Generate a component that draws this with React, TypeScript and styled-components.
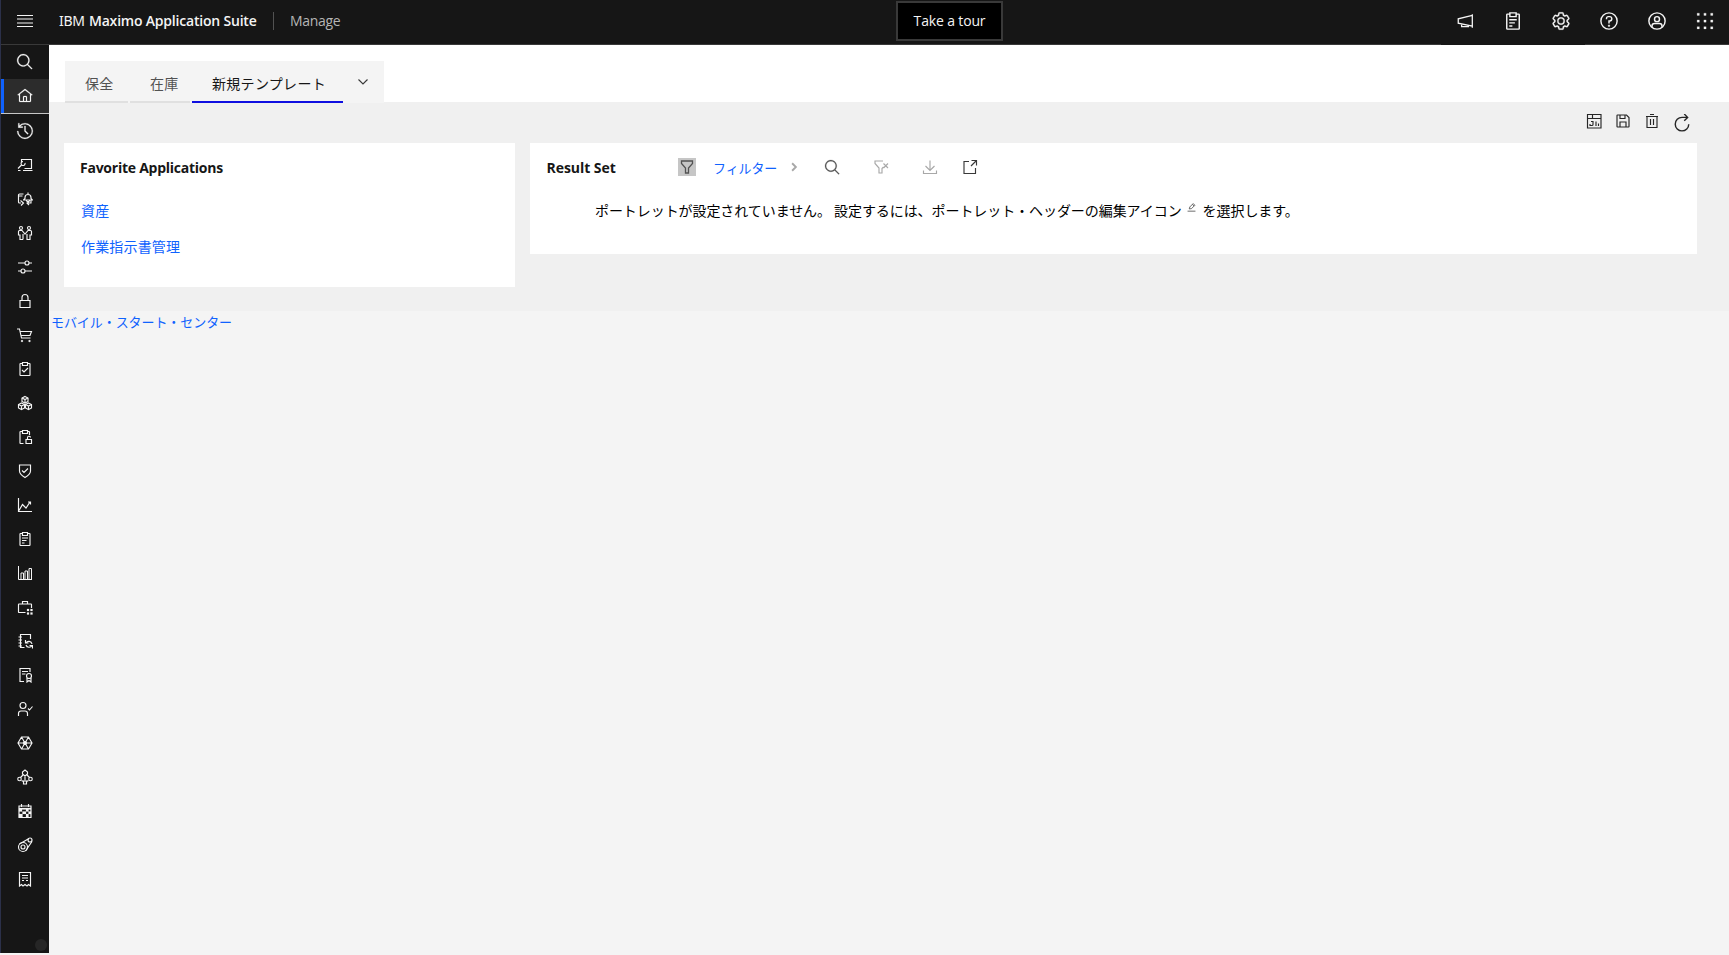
import React from 'react';
import styled, { createGlobalStyle } from 'styled-components';

const Global = createGlobalStyle`
  * { box-sizing: border-box; }
  body { margin: 0; background: #f4f4f4; overflow: hidden; }
  a { color: #0f62fe; text-decoration: none; }
`;

const latin = `'Open Sans', 'Noto Sans CJK JP', sans-serif`;
const japanese = `'Noto Sans CJK JP', 'Open Sans', sans-serif`;

/* ---------- icons (32 unit grid) ---------- */

const Svg = styled.svg<{ $size: number }>`
  display: block;
  flex: none;
  width: ${(p) => p.$size}px;
  height: ${(p) => p.$size}px;
  fill: none;
  stroke: currentColor;
  stroke-width: 2.3;
  .f { fill: currentColor; stroke: currentColor; stroke-width: 0.4; }
`;

const icons = {
  menu: <path d="M0 5h32M0 12h32M0 20h32M0 27h32" />,
  search: <path className="f" d="M29,27.5859l-7.5521-7.5521a11.0177,11.0177,0,1,0-1.4141,1.4141L27.5859,29ZM4,13a9,9,0,1,1,9,9A9.01,9.01,0,0,1,4,13Z" />,
  home: <path className="f" d="M16.6123,2.2138a1.01,1.01,0,0,0-1.2427,0L1,13.4194l1.2427,1.5717L4,13.6208V26a2.0041,2.0041,0,0,0,2,2H26a2.0037,2.0037,0,0,0,2-2V13.63L29.7573,15,31,13.4282ZM18,26H14V18h4Zm2,0V18a2.0023,2.0023,0,0,0-2-2H14a2.002,2.002,0,0,0-2,2v8H6V12.0615l10-7.79,10,7.8005V26Z" />,
  recent: <path className="f" d="M20.59 22 15 16.41 15 7 17 7 17 15.58 22 20.59 20.59 22zM16,2A13.94,13.94,0,0,0,6,6.23V2H4v8h8V8H7.08A12,12,0,1,1,4,16H2A14,14,0,1,0,16,2Z" />,
  workstation: <><path d="M9 10V5h20v18H15M12 27h19M2 27h5" /><path d="M2 23l7-7M16 12a4 4 0 1 1-4-3" /></>,
  changes: <><path d="M13 6H5a2 2 0 0 0-2 2v14a2 2 0 0 0 2 2h3M7 19l6 5-5 5M3 10h8" /><path d="M12 18h19l-3-3v-2a6 6 0 0 0-12 0v2l-3 3M22 7V3M19 19c0 3 6 3 6 0M28 19v5h-7M24 21l-4 3 4 4" /></>,
  people: <><circle cx="8" cy="6" r="3" /><circle cx="24" cy="6" r="3" /><path d="M12 29H6v-9H3v-7a2 2 0 0 1 2-2h5l6 7 6-7h5a2 2 0 0 1 2 2v7h-3v9h-6v-11M12 29V18" /></>,
  sliders: <><path d="M2 8h14M24 8h6M2 24h6M16 24h14" /><circle cx="20" cy="8" r="4" /><circle cx="12" cy="24" r="4" /></>,
  lock: <path d="M6 15h20v14H6zM10 15V9a6 6 0 0 1 12 0v6" />,
  cart: <><path d="M0 4h5l4 18h18M7 9h22l-3 8H8" /><circle className="f" cx="10" cy="28" r="2" /><circle className="f" cx="25" cy="28" r="2" /></>,
  taskDone: <><path d="M10 5H7a1 1 0 0 0-1 1v22a1 1 0 0 0 1 1h18a1 1 0 0 0 1-1V6a1 1 0 0 0-1-1h-3M11 3h10v6H11z" /><path d="M10 18l4 4 8-8" /></>,
  assets: <><path d="M16 3l6 3v7l-6 3-6-3V6zM9 16l6 3v7l-6 3-6-3v-7zM23 16l6 3v7l-6 3-6-3v-7z" /><path d="M10 6l6 3 6-3M16 9v7M3 19l6 3 6-3M9 22v7M17 19l6 3 6-3M23 22v7" /></>,
  taskLocked: <><path d="M13 29H7a1 1 0 0 1-1-1V6a1 1 0 0 1 1-1h4M21 5h3a1 1 0 0 1 1 1v6M11 3h10v6H11zM18 21h11v8H18zM21 21v-3a3 3 0 0 1 6-1" /></>,
  shield: <path d="M5 4h22v12c0 6-4 9-11 13C9 25 5 22 5 16zM10 15l4 4 8-8" />,
  line: <path d="M3 2v27h27M4 27l7-12 7 7 8-12M22 10h5v5" />,
  task: <><path d="M10 5H7a1 1 0 0 0-1 1v22a1 1 0 0 0 1 1h18a1 1 0 0 0 1-1V6a1 1 0 0 0-1-1h-3M11 3h10v6H11z" /><path d="M10 14h12M10 19h9M10 24h5" /></>,
  bars: <path strokeWidth="2" d="M3 2v27h27M8 29V16h5v13M16 29V12h5v17M24 29V7h5v22" />,
  briefcase: <><path d="M17 27H4a1 1 0 0 1-1-1V11a1 1 0 0 1 1-1h24a1 1 0 0 1 1 1v7M11 10V5h10v5" /><path className="f" d="M20 20h4v4h-4zM27 20h4v4h-4zM20 27h4v4h-4zM27 27h4v4h-4z" /></>,
  notebook: <><path d="M27 12V3H7v26h8M3 8h7M3 14h7M3 20h7M3 26h7" /><path d="M17 14v6h6M18 20a6.5 6.5 0 0 1 12 2M31 31v-6h-6M30 25a6.5 6.5 0 0 1-12-1" /></>,
  certificate: <><path d="M14 29H6V3h20v7M10 9h12M10 14h7" /><circle cx="24" cy="18" r="5" /><path d="M20 22v8l4-3 4 3v-8" /></>,
  userCheck: <><circle cx="12" cy="9" r="6" /><path d="M3 30v-5a5 5 0 0 1 5-5h8a5 5 0 0 1 5 5v5M22 15l3 3 6-7" /></>,
  wheel: <><path d="M9 4h14l7 12-7 12H9L2 16zM9 4l14 24M23 4L9 28M2 16h28" /><circle cx="16" cy="16" r="3" /></>,
  network: <><path d="M11 10V6l5-4 5 4v4l-5 4-5-4zM16 14v9M12 12l-5 5M20 12l5 5M9 23l4 2M23 23l-4 2" /><circle cx="5" cy="20" r="3.5" /><circle cx="27" cy="20" r="3.5" /><path d="M13 24h6v6h-6z" /></>,
  calendar: <><path d="M4 6h24v23H4zM9 2v6M23 2v6" /><path className="f" d="M4 10h24v3H4zM4 13h6v4H4zM18 13h5v4h-5zM11 17h7v5h-7zM4 22h7v6H4zM18 22h5v6h-5zM23 17h5v5h-5z" /></>,
  belt: <><circle cx="12" cy="20" r="9" /><circle cx="12" cy="20" r="4" /><path d="M5 14L24 3M17 28L30 9" /><circle cx="26" cy="6" r="4" /></>,
  receipt: <><path d="M5 30V3h22v27l-4-3-3 3-4-3-4 3-3-3z" /><path d="M10 9h12M10 14h12M10 19h4M18 19h4" /></>,
  megaphone: <><path d="M29 4v24M29 6L4 12v8l25 5" /><path d="M10 22v4h12v-3" /></>,
  gear: <path className="f" d="M27,16.76c0-.25,0-.5,0-.76s0-.51,0-.77l1.92-1.68A2,2,0,0,0,29.3,11L26.94,7a2,2,0,0,0-1.73-1,2,2,0,0,0-.64.1l-2.43.82a11.35,11.35,0,0,0-1.31-.75l-.51-2.52a2,2,0,0,0-2-1.61H13.64a2,2,0,0,0-2,1.61l-.51,2.52a11.48,11.48,0,0,0-1.32.75L7.43,6.06A2,2,0,0,0,6.79,6,2,2,0,0,0,5.06,7L2.7,11a2,2,0,0,0,.41,2.51L5,15.24c0,.25,0,.5,0,.76s0,.51,0,.77L3.11,18.45A2,2,0,0,0,2.7,21L5.06,25a2,2,0,0,0,1.73,1,2,2,0,0,0,.64-.1l2.43-.82a11.35,11.35,0,0,0,1.31.75l.51,2.52a2,2,0,0,0,2,1.61h4.72a2,2,0,0,0,2-1.61l.51-2.52a11.48,11.48,0,0,0,1.32-.75l2.42.82a2,2,0,0,0,.64.1,2,2,0,0,0,1.73-1L29.3,21a2,2,0,0,0-.41-2.51ZM25.21,24l-3.43-1.16a8.86,8.86,0,0,1-2.71,1.57L18.36,28H13.64l-.71-3.55a9.36,9.36,0,0,1-2.7-1.57L6.79,24,4.43,20l2.72-2.4a8.9,8.9,0,0,1,0-3.13L4.43,12,6.79,8l3.43,1.16a8.86,8.86,0,0,1,2.71-1.57L13.64,4h4.72l.71,3.55a9.36,9.36,0,0,1,2.7,1.57L25.21,8,27.57,12l-2.72,2.4a8.9,8.9,0,0,1,0,3.13L27.57,20ZM16,22a6,6,0,1,1,6-6A5.94,5.94,0,0,1,16,22Zm0-10a3.91,3.91,0,0,0-4,4,3.91,3.91,0,0,0,4,4,3.91,3.91,0,0,0,4-4A3.91,3.91,0,0,0,16,12Z" />,
  help: <><circle cx="16" cy="16" r="13" /><path d="M12 13v-1a3 3 0 0 1 3-3h2a3.5 3.5 0 0 1 0 7h-1v4" /><circle className="f" cx="16" cy="23.5" r="1.5" /></>,
  user: <><circle cx="16" cy="16" r="13" /><circle cx="16" cy="13" r="4" /><path d="M8 26v-2a4 4 0 0 1 4-4h8a4 4 0 0 1 4 4v2" /></>,
  apps: <path className="f" d="M2 2h4v4H2zM14 2h4v4h-4zM26 2h4v4h-4zM2 14h4v4H2zM14 14h4v4h-4zM26 14h4v4h-4zM2 26h4v4H2zM14 26h4v4h-4zM26 26h4v4h-4z" />,
  layout: <path d="M3 3h27v27H3zM3 11h27M13 3v8M10 17h4v6a2 2 0 0 1-2 2H8v-3M20 17v9M25 21v5" />,
  save: <path d="M4 5a1 1 0 0 1 1-1h18l5 5v18a1 1 0 0 1-1 1H5a1 1 0 0 1-1-1zM10 4v7h10V4M10 28V18h12v10" />,
  trash: <path d="M4 7h24M6 7v22h20V7M12 3h8M13 12v12M19 12v12" />,
  refresh: <path strokeWidth="2.5" d="M25 6H16A12 12 0 1 0 28 18M20 0l6 6-6 6" />,
  filter: <path strokeWidth="2.6" d="M5 4h22v5l-8 9v10h-6V18L5 9z" />,
  filterClear: <path d="M20 4H4v5l8 9v10h6v-9l3-3M21 9l9 9M30 9l-9 9" />,
  download: <path d="M16 3v20M7 14l9 9 9-9M3 23v6h26v-6" />,
  launch: <path d="M14 5H4v24h23V18M19 3h10v10M29 3L18 14" />,
  chevronDown: <path d="M7 11l9 9 9-9" />,
  chevronRight: <path strokeWidth="5" d="M11 6l10 10-10 10" />,
  edit: <path strokeWidth="3" d="M2 29h28M8 21l2-7L22 2l6 6-12 12zM19 5l6 6" />,
};

type IconName = keyof typeof icons;
const Icon = ({ name, size = 16 }: { name: IconName; size?: number }) => (
  <Svg $size={size} viewBox="0 0 32 32">{icons[name]}</Svg>
);

/* ---------- header ---------- */

const Page = styled.div`
  display: flex;
  flex-direction: column;
  height: 955px;
  font-family: ${latin};
  color: #161616;
`;

const Header = styled.header`
  display: grid;
  grid-template-columns: 895px 107px 1fr;
  flex: none;
  height: 45px;
  background: linear-gradient(90deg, #393939 1440px, #161616 1440px 1584px, #393939 1584px) bottom / 100% 1px no-repeat #161616;
  border-left: 1px solid #2b3049;
  color: #f4f4f4;
`;

const Brand = styled.div`
  display: flex;
  align-items: center;
  height: 41px;
  padding-left: 16px;
  font-size: 14px;
  white-space: pre;
`;

const Product = styled.span`
  display: flex;
  width: 198px;
  margin-left: 26px;
`;

const Ibm = styled.span`
  width: 30px;
  font-family: 'Noto Sans', sans-serif;
  letter-spacing: -0.3px;
`;

const Suite = styled.span`
  font-weight: 600;
  letter-spacing: -0.2px;
`;

const AppName = styled.span`
  height: 18px;
  margin-left: 16px;
  padding-left: 16px;
  border-left: 1px solid #525252;
  line-height: 17px;
  color: #b5b5b5;
  letter-spacing: -0.3px;
`;

const TourButton = styled.button`
  height: 40px;
  margin-top: 1px;
  padding: 0 0 2px;
  border: 2px solid #393939;
  background: #000;
  color: #f4f4f4;
  font: 14px ${latin};
  letter-spacing: -0.15px;
`;

const HeaderActions = styled.div`
  display: flex;
  justify-content: flex-end;
  height: 44px;
`;

const HeaderAction = styled.button`
  display: flex;
  align-items: center;
  justify-content: center;
  width: 48px;
  height: 42px;
  padding: 0;
  border: 0;
  background: none;
  color: inherit;
`;

/* ---------- side navigation ---------- */

const Body = styled.div`
  display: flex;
  flex: 1;
  min-height: 0;
`;

const SideNav = styled.nav`
  display: flex;
  flex-direction: column;
  flex: none;
  width: 49px;
  height: 908px;
  background: #161616;
  border-left: 1px solid #2b3049;
  color: #f4f4f4;
`;

const NavItem = styled.a<{ $active?: boolean }>`
  display: flex;
  align-items: center;
  justify-content: center;
  flex: none;
  height: ${(p) => (p.$active ? 35 : 34)}px;
  color: #f4f4f4;
  ${(p) => p.$active && `
    background: #2c2c2c;
    border-bottom: 1px solid #c6c6c6;
    box-shadow: inset 3px 0 #0f62fe;
  `}
`;

const NavDot = styled.span`
  width: 12px;
  height: 12px;
  margin: auto 2px 2px auto;
  border-radius: 50%;
  background: #262626;
`;

/* ---------- start centre ---------- */

const Main = styled.main`
  display: flex;
  flex-direction: column;
  flex: 1;
`;

const TabBar = styled.div`
  display: flex;
  height: 58px;
  padding: 16px 0 0 16px;
  background: linear-gradient(#fff 57px, #f0f0f0 57px);
`;

const TabList = styled.div`
  display: flex;
  width: 319px;
  background: #f4f4f4;
`;

const Tab = styled.button<{ $width: number; $selected?: boolean }>`
  width: ${(p) => p.$width}px;
  margin-right: ${(p) => (p.$selected ? 0 : 2)}px;
  padding: 3px 0 0 20px;
  text-align: left;
  border: 0;
  border-bottom: 2px solid ${(p) => (p.$selected ? '#0f0fe0' : '#e0e0e0')};
  background: none;
  color: ${(p) => (p.$selected ? '#161616' : '#525252')};
  font: 14px ${japanese};
  letter-spacing: ${(p) => (p.$selected ? 0.3 : 0.16)}px;
  white-space: nowrap;
`;

const TabMenu = styled.button`
  display: flex;
  align-items: center;
  justify-content: center;
  width: 39px;
  padding: 0 0 1px;
  border: 0;
  background: none;
  color: #393939;
`;

const Dashboard = styled.section`
  height: 208px;
  padding-left: 15px;
  background: #f0f0f0;
`;

const Toolbar = styled.div`
  display: flex;
  justify-content: flex-end;
  align-items: flex-start;
  gap: 13px;
  height: 40px;
  padding: 10px 38px 0 0;
  color: #262626;
`;

const RefreshSlot = styled.span`
  margin-top: 1px;
`;

const Portlets = styled.div`
  display: flex;
  align-items: flex-start;
  gap: 15px;
`;

const Portlet = styled.article<{ $width: number; $height: number }>`
  width: ${(p) => p.$width}px;
  height: ${(p) => p.$height}px;
  padding: 12px 16px 0;
  background: #fff;
`;

const PortletHeader = styled.div`
  display: flex;
  align-items: center;
  height: 26px;
`;

const Title = styled.h2<{ $spacing: number }>`
  margin: -2px 0 0;
  font-size: 14px;
  font-weight: 700;
  letter-spacing: ${(p) => p.$spacing}px;
  white-space: nowrap;
`;

const ResultTitle = styled.div`
  width: 132px;
  padding-left: 0.5px;
`;

const Favorites = styled.div`
  display: flex;
  flex-direction: column;
  gap: 12px;
  padding: 17px 0 0 1px;
  font: 14px/24px ${japanese};
  letter-spacing: 0.16px;
`;

const FilterToggle = styled.span`
  display: flex;
  align-items: center;
  justify-content: center;
  width: 18px;
  height: 18px;
  margin-top: -2px;
  background: #c6c6c6;
  color: #525252;
`;

const FilterLink = styled.a`
  width: 76px;
  margin: -2px 0 0 17px;
  font: 13px ${japanese};
  letter-spacing: -0.1px;
`;

const Tool = styled.span<{ $left: number; $color: string }>`
  margin: -2px 0 0 ${(p) => p.$left}px;
  color: ${(p) => p.$color};
`;

const Message = styled.p`
  display: flex;
  align-items: center;
  margin: 17px 0 0 49px;
  font: 14px/24px ${japanese};
  letter-spacing: -0.07px;
  color: #000;
  white-space: pre;
`;

const EditMark = styled.span`
  margin: -5px 7px 0 5px;
  color: #525252;
`;

const MobileLink = styled.a`
  margin-top: -1px;
  padding-left: 2px;
  font: 13px/24px ${japanese};
  letter-spacing: -0.07px;
`;

const headerActions: IconName[] = ['megaphone', 'task', 'gear', 'help', 'user', 'apps'];
const navItems: IconName[] = [
  'search', 'home', 'recent', 'workstation', 'changes', 'people', 'sliders', 'lock', 'cart',
  'taskDone', 'assets', 'taskLocked', 'shield', 'line', 'task', 'bars', 'briefcase', 'notebook',
  'certificate', 'userCheck', 'wheel', 'network', 'calendar', 'belt', 'receipt',
];
const headerIconSizes: Partial<Record<IconName, number>> = { apps: 18, megaphone: 18 };
const navIconSizes: Partial<Record<IconName, number>> = { search: 18, recent: 18 };

export default function App() {
  return (
    <Page>
      <Global />
      <Header>
        <Brand>
          <Icon name="menu" />
          <Product><Ibm>IBM</Ibm><Suite>Maximo Application Suite</Suite></Product>
          <AppName>Manage</AppName>
        </Brand>
        <TourButton>Take a tour</TourButton>
        <HeaderActions>
          {headerActions.map((name) => (
            <HeaderAction key={name}><Icon name={name} size={headerIconSizes[name] ?? 20} /></HeaderAction>
          ))}
        </HeaderActions>
      </Header>
      <Body>
        <SideNav>
          {navItems.map((name) => (
            <NavItem key={name} $active={name === 'home'}><Icon name={name} size={navIconSizes[name] ?? 16} /></NavItem>
          ))}
          <NavDot />
        </SideNav>
        <Main>
          <TabBar>
            <TabList>
              <Tab $width={63}>保全</Tab>
              <Tab $width={60}>在庫</Tab>
              <Tab $width={151} $selected>新規テンプレート</Tab>
              <TabMenu><Icon name="chevronDown" /></TabMenu>
            </TabList>
          </TabBar>
          <Dashboard>
            <Toolbar>
              <Icon name="layout" />
              <Icon name="save" />
              <Icon name="trash" />
              <RefreshSlot><Icon name="refresh" size={18} /></RefreshSlot>
            </Toolbar>
            <Portlets>
              <Portlet $width={451} $height={144}>
                <PortletHeader><Title $spacing={-0.25}>Favorite Applications</Title></PortletHeader>
                <Favorites>
                  <a>資産</a>
                  <a>作業指示書管理</a>
                </Favorites>
              </Portlet>
              <Portlet $width={1167} $height={111}>
                <PortletHeader>
                  <ResultTitle><Title $spacing={-0.05}>Result Set</Title></ResultTitle>
                  <FilterToggle><Icon name="filter" /></FilterToggle>
                  <FilterLink>フィルター</FilterLink>
                  <Tool $left={-1} $color="#a8a8a8"><Icon name="chevronRight" size={12} /></Tool>
                  <Tool $left={24} $color="#525252"><Icon name="search" size={17} /></Tool>
                  <Tool $left={32} $color="#a8a8a8"><Icon name="filterClear" /></Tool>
                  <Tool $left={33} $color="#a8a8a8"><Icon name="download" /></Tool>
                  <Tool $left={24} $color="#393939"><Icon name="launch" /></Tool>
                </PortletHeader>
                <Message>
                  ポートレットが設定されていません。 設定するには、ポートレット・ヘッダーの編集アイコン
                  <EditMark><Icon name="edit" size={9} /></EditMark>
                  を選択します。
                </Message>
              </Portlet>
            </Portlets>
          </Dashboard>
          <MobileLink>モバイル・スタート・センター</MobileLink>
        </Main>
      </Body>
    </Page>
  );
}
